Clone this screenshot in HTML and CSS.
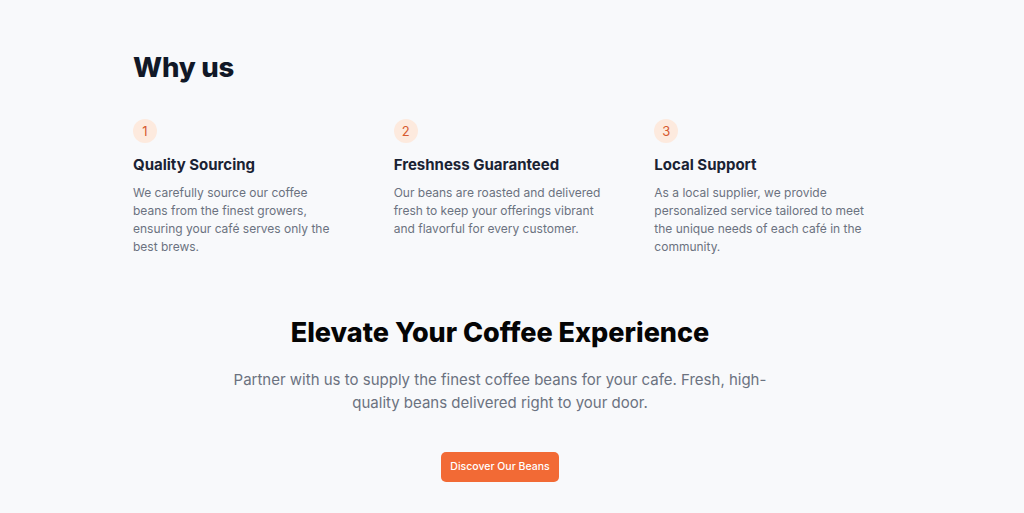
FILE: index.html
```html
<!DOCTYPE html>
<html lang="en">
<head>
<meta charset="utf-8">
<title>Why us</title>
<link rel="stylesheet" href="styles.css">
</head>
<body>
<main class="page">
  <section class="why">
    <h2 class="why-title">Why us</h2>
    <div class="features">
      <div class="feature">
        <span class="badge">1</span>
        <h3 class="feature-title">Quality Sourcing</h3>
        <p class="feature-text">We carefully source our coffee beans from the finest growers, ensuring your café serves only the best brews.</p>
      </div>
      <div class="feature">
        <span class="badge">2</span>
        <h3 class="feature-title">Freshness Guaranteed</h3>
        <p class="feature-text">Our beans are roasted and delivered fresh to keep your offerings vibrant and flavorful for every customer.</p>
      </div>
      <div class="feature">
        <span class="badge">3</span>
        <h3 class="feature-title">Local Support</h3>
        <p class="feature-text">As a local supplier, we provide personalized service tailored to meet the unique needs of each café in the community.</p>
      </div>
    </div>
  </section>
  <section class="cta">
    <h2 class="cta-title">Elevate Your Coffee Experience</h2>
    <p class="cta-text">Partner with us to supply the finest coffee beans for your cafe. Fresh, high-quality beans delivered right to your door.</p>
    <a class="cta-button" href="#">Discover Our Beans</a>
  </section>
</main>
</body>
</html>
```

FILE: styles.css
```css
* { box-sizing: border-box; }
html, body { margin: 0; padding: 0; }
body {
  background: #f8f9fb;
  font-family: Inter, "Noto Sans", Arial, sans-serif;
  color: #111827;
  -webkit-font-smoothing: antialiased;
}
.page {
  padding: 47px 0 0;
}
.why {
  width: 758px;
  margin: 0 auto;
}
.why-title {
  margin: 0;
  font-size: 27.5px;
  line-height: 40px;
  font-weight: 800;
  letter-spacing: -0.2px;
  color: #111827;
}
.features {
  display: grid;
  grid-template-columns: repeat(3, 1fr);
  gap: 24px;
  margin-top: 32px;
}
.feature {
  display: flex;
  flex-direction: column;
  align-items: flex-start;
}
.badge {
  width: 24px;
  height: 24px;
  border-radius: 50%;
  background: #fdeade;
  color: #d65a30;
  font-size: 13px;
  display: flex;
  align-items: center;
  justify-content: center;
}
.feature-title {
  margin: 10px 0 0;
  font-size: 15px;
  line-height: 24px;
  font-weight: 700;
  color: #1a2233;
}
.feature-text {
  margin: 7px 0 0;
  max-width: 212px;
  font-size: 12px;
  line-height: 18px;
  color: #6b7280;
}
.cta {
  width: 544px;
  margin: 59px auto 0;
  position: relative;
  left: -12px;
  text-align: center;
}
.cta-title {
  margin: 0;
  font-size: 27px;
  line-height: 36px;
  font-weight: 800;
  color: #050505;
}
.cta-text {
  margin: 17px 0 0;
  font-size: 15px;
  line-height: 23px;
  color: #6b7280;
}
.cta-button {
  display: inline-block;
  margin-top: 38px;
  padding: 0 9px;
  height: 30px;
  line-height: 30px;
  border-radius: 5px;
  background: #f26a35;
  color: #ffffff;
  font-size: 10.5px;
  font-weight: 500;
  text-decoration: none;
}
```
